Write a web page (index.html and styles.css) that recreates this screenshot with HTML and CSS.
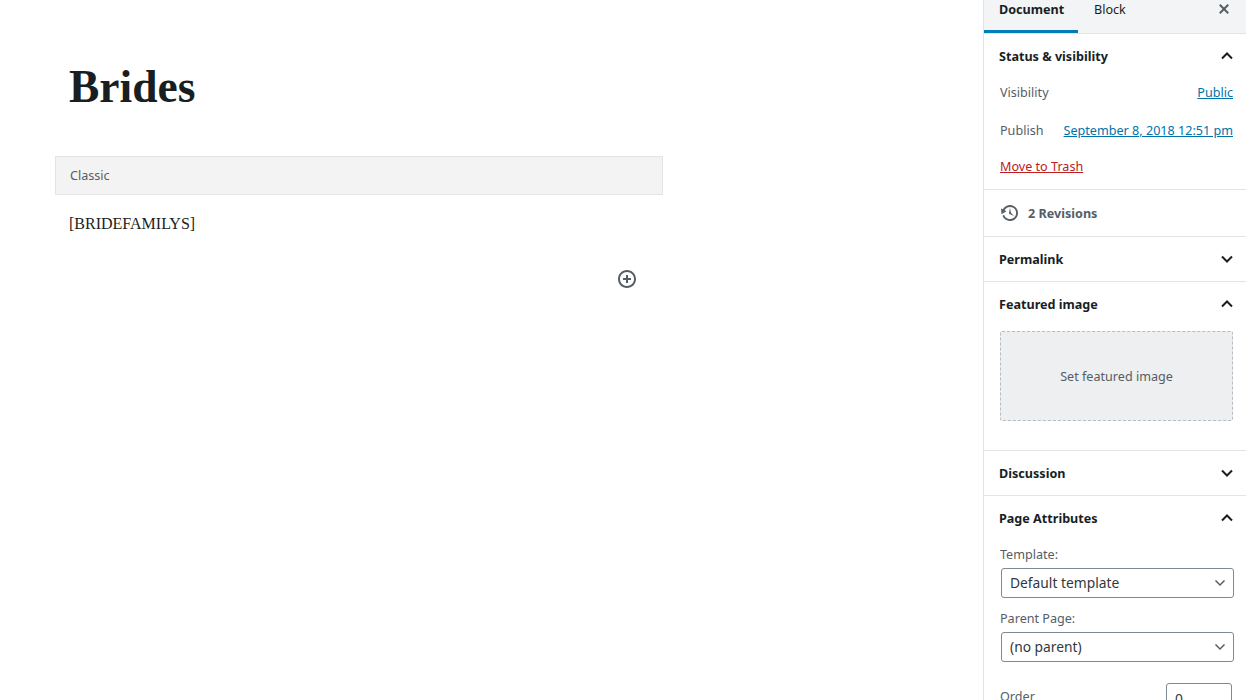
FILE: index.html
```html
<!DOCTYPE html>
<html>
<head>
	<meta charset="UTF-8">
	<title>Brides</title>
	<link rel="stylesheet" href="styles.css">
</head>
<body>
	<div class="layout">
		<div class="editor">
			<h1 class="post-title">Brides</h1>
			<div class="classic-bar">Classic</div>
			<p class="shortcode">[BRIDEFAMILYS]</p>
			<div class="inserter">
				<svg width="20" height="20" viewBox="0 0 20 20"><path d="M10 1c-5 0-9 4-9 9s4 9 9 9 9-4 9-9-4-9-9-9zm0 16c-3.9 0-7-3.1-7-7s3.1-7 7-7 7 3.1 7 7-3.1 7-7 7zm1-11H9v3H6v2h3v3h2v-3h3V9h-3V6z"/></svg>
			</div>
		</div>
		<div class="sidebar">
			<div class="tabs">
				<span class="tab active">Document</span>
				<span class="tab">Block</span>
				<svg class="close" width="20" height="20" viewBox="0 0 20 20"><path d="M14.95 6.46L11.41 10l3.54 3.54-1.41 1.41L10 11.42l-3.53 3.53-1.42-1.42L8.58 10 5.05 6.47l1.42-1.42L10 8.58l3.54-3.53z"/></svg>
			</div>

			<div class="panel status">
				<div class="panel-head">Status &amp; visibility
					<svg class="chev" width="14" height="10" viewBox="0 0 14 10"><path d="M2 7.5l5-5 5 5"/></svg>
				</div>
				<div class="row row-vis"><span>Visibility</span><a href="#">Public</a></div>
				<div class="row row-pub"><span>Publish</span><a href="#">September 8, 2018 12:51 pm</a></div>
				<div class="row row-trash"><a href="#" class="trash">Move to Trash</a></div>
			</div>

			<div class="panel revisions">
				<svg width="20" height="20" viewBox="0 0 20 20"><path d="M13.65 2.88c3.93 2.01 5.48 6.84 3.47 10.77s-6.83 5.48-10.77 3.47c-1.87-.96-3.2-2.56-3.86-4.4l1.64-1.03c.45 1.57 1.52 2.95 3.08 3.76 3.01 1.54 6.69.35 8.23-2.66 1.55-3.01.36-6.69-2.65-8.24C9.78 3.01 6.1 4.2 4.56 7.21l1.88.97-4.95 3.08-.39-5.82 1.78.91C4.9 2.4 9.75.89 13.65 2.88zm-4.36 7.83C9.11 10.53 9 10.28 9 10c0-.07.03-.12.04-.19h-.01L10 5l.97 4.81L14 13l-4.5-2.12.02-.02c-.08-.04-.16-.09-.23-.15z"/></svg>
				<span>2 Revisions</span>
			</div>

			<div class="panel">
				<div class="panel-head">Permalink
					<svg class="chev" width="14" height="10" viewBox="0 0 14 10"><path d="M2 2.5l5 5 5-5"/></svg>
				</div>
			</div>

			<div class="panel featured">
				<div class="panel-head">Featured image
					<svg class="chev" width="14" height="10" viewBox="0 0 14 10"><path d="M2 7.5l5-5 5 5"/></svg>
				</div>
				<div class="dropzone">Set featured image</div>
			</div>

			<div class="panel">
				<div class="panel-head">Discussion
					<svg class="chev" width="14" height="10" viewBox="0 0 14 10"><path d="M2 2.5l5 5 5-5"/></svg>
				</div>
			</div>

			<div class="panel attributes">
				<div class="panel-head">Page Attributes
					<svg class="chev" width="14" height="10" viewBox="0 0 14 10"><path d="M2 7.5l5-5 5 5"/></svg>
				</div>
				<label class="field-label">Template:</label>
				<div class="select-wrap">
					<select><option>Default template</option></select>
					<svg width="12" height="8" viewBox="0 0 12 8"><path d="M1.5 1.5L6 6l4.500-4.500"/></svg>
				</div>
				<label class="field-label second">Parent Page:</label>
				<div class="select-wrap">
					<select><option>(no parent)</option></select>
					<svg width="12" height="8" viewBox="0 0 12 8"><path d="M1.5 1.5L6 6l4.500-4.500"/></svg>
				</div>
				<div class="order">
					<span>Order</span>
					<input type="text" value="0">
				</div>
			</div>
		</div>
	</div>
</body>
</html>
```

FILE: styles.css
```css
html,body{
	margin: 0;
	height: 700px;
	overflow: hidden;
	background: #fff;
}
body{
	font-family: "Noto Sans", "Open Sans", sans-serif;
	font-size: 12.6px;
	color: #555d66;
}
.layout{
	display: flex;
	height: 700px;
	overflow: hidden;
}

/* editor */
.editor{
	width: 983px;
	flex: none;
	padding: 0 0 0 55px;
	box-sizing: border-box;
}
.post-title{
	margin: 0;
	padding: 62px 0 0 14px;
	height: 156px;
	box-sizing: border-box;
	font-family: "Liberation Serif", serif;
	font-size: 45.5px;
	line-height: 50px;
	font-weight: bold;
	color: #191e23;
}
.classic-bar{
	width: 608px;
	height: 39px;
	box-sizing: border-box;
	padding-left: 14px;
	line-height: 37px;
	background: #f3f3f4;
	border: 1px solid #e2e4e7;
}
.shortcode{
	margin: 0;
	padding: 18px 0 0 14px;
	font-family: "Liberation Serif", serif;
	font-size: 16px;
	line-height: 22px;
	color: #191e23;
}
.inserter{
	width: 582px;
	margin-top: 34px;
	display: flex;
	justify-content: flex-end;
}
.inserter svg{
	fill: #555d66;
}

/* sidebar */
.sidebar{
	width: 263px;
	flex: none;
	box-sizing: border-box;
	border-left: 1px solid #e2e4e7;
	height: 700px;
	overflow: hidden;
}
.tabs{
	display: flex;
	height: 34px;
	box-sizing: border-box;
	background: #f3f4f5;
	border-bottom: 1px solid #e2e4e7;
}
.tab{
	padding: 0 16px;
	height: 33px;
	box-sizing: border-box;
	line-height: 20px;
	color: #191e23;
}
.tab.active{
	width: 94px;
	padding: 0 15px;
	font-weight: bold;
	border-bottom: 3px solid #007cba;
}
.close{
	margin: -1px 12px 0 auto;
	fill: #555d66;
}
.panel{
	border-bottom: 1px solid #e2e4e7;
}
.panel-head{
	display: flex;
	justify-content: space-between;
	align-items: center;
	height: 44px;
	padding: 0 12px 0 15px;
	font-weight: bold;
	color: #191e23;
}
.chev{
	fill: none;
	stroke: #191e23;
	stroke-width: 2;
}
.row{
	display: flex;
	justify-content: space-between;
	padding: 0 13px 0 16px;
	line-height: 18px;
}
.row a{
	color: #0073aa;
}
.row-vis{
	margin-top: 6px;
}
.row-pub{
	margin-top: 20px;
}
.row-trash{
	margin-top: 18px;
	padding-bottom: 13px;
}
.row a.trash{
	color: #bc2020;
}
.revisions{
	display: flex;
	align-items: center;
	height: 46px;
	padding-left: 16px;
	font-weight: bold;
}
.revisions svg{
	fill: #555d66;
	margin-right: 8px;
}
.featured{
	height: 169px;
	box-sizing: border-box;
}
.dropzone{
	margin: 5px 13px 0 16px;
	height: 90px;
	box-sizing: border-box;
	display: flex;
	align-items: center;
	justify-content: center;
	background: #edeff0;
	border: 1px dashed #b5bcc2;
	border-radius: 2px;
}
.field-label{
	display: block;
	margin: 6px 0 0 16px;
	line-height: 18px;
}
.field-label.second{
	margin-top: 12px;
}
.select-wrap{
	position: relative;
	margin: 4px 12px 0 17px;
	height: 30px;
}
.select-wrap select{
	display: block;
	width: 100%;
	height: 30px;
	padding: 0 8px 2px;
	font-family: "Noto Sans", "Open Sans", sans-serif;
	font-size: 13.8px;
	color: #32373c;
	background: #fff;
	border: 1px solid #7e8993;
	border-radius: 3px;
	-webkit-appearance: none;
	appearance: none;
}
.select-wrap svg{
	position: absolute;
	right: 8px;
	top: 11px;
	fill: none;
	stroke: #555d66;
	stroke-width: 1.500;
}
.order{
	display: flex;
	justify-content: space-between;
	align-items: flex-start;
	margin: 21px 14px 0 16px;
}
.order span{
	margin-top: 5px;
}
.order input{
	width: 66px;
	height: 30px;
	box-sizing: border-box;
	padding: 0 8px;
	font-family: "Noto Sans", "Open Sans", sans-serif;
	font-size: 13.8px;
	color: #32373c;
	border: 1px solid #7e8993;
	border-radius: 3px;
}
```
